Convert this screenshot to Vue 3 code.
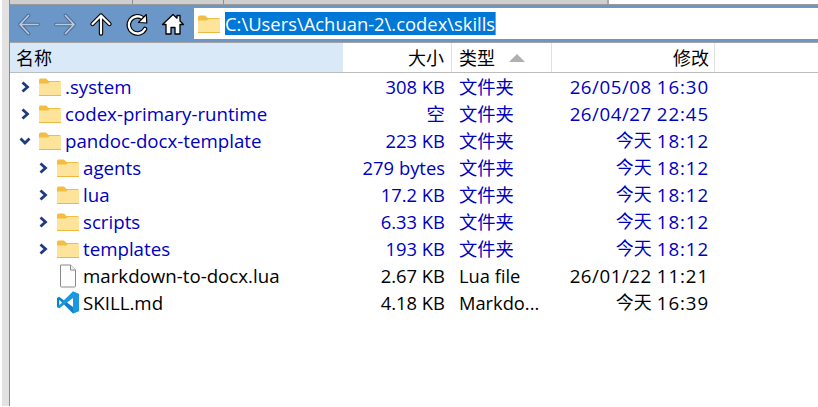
<script setup>
const rows = [
  { name: '.system', size: '308 KB', type: '文件夹', date: '26/05/08', time: '16:30', depth: 0, kind: 'folder', toggle: 'closed' },
  { name: 'codex-primary-runtime', size: '空', type: '文件夹', date: '26/04/27', time: '22:45', depth: 0, kind: 'folder', toggle: 'closed' },
  { name: 'pandoc-docx-template', size: '223 KB', type: '文件夹', date: '今天', time: '18:12', depth: 0, kind: 'folder', toggle: 'open' },
  { name: 'agents', size: '279 bytes', type: '文件夹', date: '今天', time: '18:12', depth: 1, kind: 'folder', toggle: 'closed' },
  { name: 'lua', size: '17.2 KB', type: '文件夹', date: '今天', time: '18:12', depth: 1, kind: 'folder', toggle: 'closed' },
  { name: 'scripts', size: '6.33 KB', type: '文件夹', date: '今天', time: '18:12', depth: 1, kind: 'folder', toggle: 'closed' },
  { name: 'templates', size: '193 KB', type: '文件夹', date: '今天', time: '18:12', depth: 1, kind: 'folder', toggle: 'closed' },
  { name: 'markdown-to-docx.lua', size: '2.67 KB', type: 'Lua file', date: '26/01/22', time: '11:21', depth: 1, kind: 'file', toggle: '' },
  { name: 'SKILL.md', size: '4.18 KB', type: 'Markdo...', date: '今天', time: '16:39', depth: 1, kind: 'vscode', toggle: '' },
]
</script>

<template>
  <div class="window">
    <div class="tabs">
      <div class="tab t1"></div>
      <div class="tab t2"></div>
      <div class="tab t3"></div>
      <div class="tab-rest"></div>
    </div>
    <div class="body">
      <div class="gutter"></div>
      <div class="main">
        <div class="toolbar">
          <button class="tool">
            <svg width="24" height="24" viewBox="0 0 24 24" fill="none" stroke-linecap="round" stroke-linejoin="round">
              <path d="M21 12.5H3M11.5 3.5L3 12.5L11.5 21.5" stroke="#4f6b92" stroke-width="3.6" />
              <path d="M21 12.5H3M11.5 3.5L3 12.5L11.5 21.5" stroke="#b9c9de" stroke-width="1.7" />
            </svg>
          </button>
          <button class="tool">
            <svg width="24" height="24" viewBox="0 0 24 24" fill="none" stroke-linecap="round" stroke-linejoin="round">
              <path d="M3 12.5H21M12.5 3.5L21 12.5L12.5 21.5" stroke="#4f6b92" stroke-width="3.6" />
              <path d="M3 12.5H21M12.5 3.5L21 12.5L12.5 21.5" stroke="#b9c9de" stroke-width="1.7" />
            </svg>
          </button>
          <button class="tool">
            <svg width="24" height="24" viewBox="0 0 24 24" fill="none" stroke-linecap="round" stroke-linejoin="round">
              <path d="M12 21.5V3.5M3.5 12L12 3.5L20.5 12" stroke="#000" stroke-width="4.4" />
              <path d="M12 21.5V3.5M3.5 12L12 3.5L20.5 12" stroke="#fff" stroke-width="2.2" />
            </svg>
          </button>
          <button class="tool">
            <svg width="24" height="24" viewBox="0 0 24 24" fill="none" stroke-linecap="round" stroke-linejoin="round">
              <path d="M20 17A8.6 8.6 0 1 1 17.5 6" stroke="#000" stroke-width="4.6" />
              <path d="M20 17A8.6 8.6 0 1 1 17.5 6" stroke="#fff" stroke-width="2.4" />
              <path d="M13.5 10.5L21.8 11L21.3 2.5Z" fill="#fff" stroke="#000" stroke-width="1.2" />
            </svg>
          </button>
          <button class="tool">
            <svg width="24" height="24" viewBox="0 0 24 24" stroke-linejoin="round">
              <path d="M12 2.5L1.5 12.5H5V22H10V15.5H14V22H19V12.5H22.5L19 9V3.5H16V6.2Z" fill="#fff" stroke="#000" stroke-width="1.3" />
            </svg>
          </button>
          <div class="address">
            <svg class="folder" width="22" height="18" viewBox="0 0 22 18">
              <path d="M0 2.2Q0 0.5 1.5 0.5H7L9.5 3H20.5Q22 3 22 4.5V16.5Q22 18 20.5 18H1.5Q0 18 0 16.5Z" fill="#f3bd42" />
              <path d="M0 5.5L9 5.5L10.8 4H22V17H0Z" fill="#fde49a" />
              <path d="M0 17H22V18H0Z" fill="#efb840" />
            </svg>
            <span class="path">C:\Users\Achuan-2\.codex\skills</span>
            <span class="caret"></span>
          </div>
        </div>
        <div class="sep"></div>
        <div class="grid head">
          <div class="cell name-h">名称</div>
          <div class="cell size-h">大小</div>
          <div class="cell type-h">类型<span class="sort"></span></div>
          <div class="cell date-h">修改</div>
        </div>
        <div class="list">
          <div v-for="r in rows" :key="r.name" class="grid row" :class="{ plain: r.kind !== 'folder' }">
            <div class="cell name" :class="'d' + r.depth">
              <span class="toggle">
                <svg v-if="r.toggle === 'closed'" width="10" height="12" viewBox="0 0 10 12" fill="none">
                  <path d="M2.5 1.5L7.5 6L2.5 10.5" stroke="#1f3a80" stroke-width="2.8" />
                </svg>
                <svg v-else-if="r.toggle === 'open'" width="12" height="10" viewBox="0 0 12 10" fill="none">
                  <path d="M1.5 2.5L6 7L10.5 2.5" stroke="#1f3a80" stroke-width="2.8" />
                </svg>
              </span>
              <span class="icon">
                <svg v-if="r.kind === 'folder'" width="22" height="18" viewBox="0 0 22 18">
                  <path d="M0 2.2Q0 0.5 1.5 0.5H7L9.5 3H20.5Q22 3 22 4.5V16.5Q22 18 20.5 18H1.5Q0 18 0 16.5Z" fill="#f3bd42" />
                  <path d="M0 5.5L9 5.5L10.8 4H22V17H0Z" fill="#fde49a" />
                  <path d="M0 17H22V18H0Z" fill="#efb840" />
                </svg>
                <svg v-else-if="r.kind === 'file'" width="18" height="24" viewBox="0 0 18 24">
                  <path d="M1.5 1H11.5L16.5 6V22Q16.5 23 15.5 23H2.5Q1.5 23 1.5 22Z" fill="#fdfdfd" stroke="#8a8a8a" />
                  <path d="M11.5 1V6H16.5" fill="#f2f2f2" stroke="#8a8a8a" />
                </svg>
                <svg v-else width="25" height="25" viewBox="0 0 24 24">
                  <path d="M17 1L8 10L3.2 6.3L1 7.4V16.6L3.2 17.7L8 14L17 23L23 20.6V3.4Z" fill="#0f7fc9" />
                  <path d="M17 1L23 3.4V20.6L17 23V7.5L8 14L3.2 17.7L1 16.6Z" fill="#1a9be6" opacity=".9" />
                  <path d="M17 7.5V16.5L11 12Z" fill="#fff" />
                  <path d="M3.2 9.3L6 12L3.2 14.7Z" fill="#fff" />
                </svg>
              </span>
              <span class="label">{{ r.name }}</span>
            </div>
            <div class="cell size">{{ r.size }}</div>
            <div class="cell type">{{ r.type }}</div>
            <div class="cell date">
              <span class="d" :class="{ cjk: r.date === '今天' }">{{ r.date }}</span>
              <span class="t">{{ r.time }}</span>
            </div>
          </div>
        </div>
      </div>
    </div>
  </div>
</template>

<style scoped>
.window {
  width: 818px;
  height: 407px;
  background: #fff;
  overflow: hidden;
  font-family: "Open Sans", "Noto Sans CJK SC", sans-serif;
  font-size: 18px;
  color: #000;
}
.tabs {
  display: flex;
  height: 5px;
  box-sizing: border-box;
  padding-left: 10px;
  border-bottom: 1px solid #9a9a9a;
}
.tab {
  background: #cfcfcf;
  border-right: 1px solid #8f8f8f;
}
.t1 { width: 122px; }
.t2 { width: 90px; }
.t3 { width: 383px; border-right: 2px solid #a8a8a8; }
.tab-rest { flex: 1; }
.body {
  display: flex;
  height: 402px;
}
.gutter {
  width: 10px;
  box-sizing: border-box;
  height: 406px;
  margin-top: -5px;
  border-left: 2px solid #fff;
  border-right: 1px solid #8c8c8c;
  background: #e2e2e2;
}
.main {
  flex: 1;
  min-width: 0;
}
.toolbar {
  display: flex;
  align-items: center;
  height: 37px;
  padding-left: 1px;
  background: #6a97c8;
}
.tool {
  width: 36px;
  height: 36px;
  padding: 0;
  border: 0;
  background: transparent;
  display: flex;
  align-items: center;
  justify-content: center;
  flex: none;
}
.address {
  flex: 1;
  margin-left: 3px;
  height: 31px;
  background: #fff;
  display: flex;
  align-items: center;
  padding-left: 4px;
}
.folder { flex: none; }
.path {
  margin-left: 5px;
  background: #0078d7;
  color: #fff;
  font-size: 18.4px;
  height: 23px;
  line-height: 23px;
  white-space: nowrap;
}
.caret {
  width: 1px;
  height: 23px;
  background: #e08a3c;
}
.sep {
  height: 1px;
  background: #a3a3a3;
}
.grid {
  display: grid;
  grid-template-columns: 333px 109px 100px 163px;
}
.head {
  height: 29px;
  border-bottom: 1px solid #bdbdbd;
  line-height: 30px;
}
.cell {
  box-sizing: border-box;
  white-space: nowrap;
  overflow: hidden;
}
.name-h {
  background: #d9e9f7;
  padding-left: 6px;
}
.size-h {
  text-align: right;
  padding-right: 7px;
  border-right: 1px solid #e0e0e0;
}
.type-h {
  padding-left: 7px;
  border-right: 1px solid #e0e0e0;
  display: flex;
  align-items: center;
}
.sort {
  margin-left: 14px;
  width: 0;
  height: 0;
  border-left: 8px solid transparent;
  border-right: 8px solid transparent;
  border-bottom: 8px solid #b0b0b0;
}
.date-h {
  text-align: right;
  padding-right: 5px;
  border-right: 1px solid #e0e0e0;
}
.row {
  height: 27px;
  line-height: 27px;
  font-size: 18.7px;
  color: #0000c0;
}
.row.plain {
  color: #000;
}
.name {
  display: flex;
  align-items: center;
}
.name.d0 { padding-left: 9px; }
.name.d1 { padding-left: 27px; }
.toggle {
  width: 12px;
  flex: none;
  display: flex;
  align-items: center;
  justify-content: center;
}
.icon {
  width: 24px;
  margin-left: 7px;
  margin-right: 3px;
  flex: none;
  display: flex;
  align-items: center;
  justify-content: center;
}
.size {
  text-align: right;
  padding-right: 7px;
  font-size: 18.4px;
}
.type {
  padding-left: 7px;
  font-size: 18.3px;
}
.date {
  display: flex;
  justify-content: flex-end;
  padding-right: 6px;
}
.d {
  letter-spacing: 0.55px;
}
.d.cjk {
  letter-spacing: 0;
  font-size: 18px;
}
.t {
  margin-left: 5px;
  letter-spacing: 0.9px;
}
</style>

<style>
html, body { margin: 0; background: #fff; }
</style>
